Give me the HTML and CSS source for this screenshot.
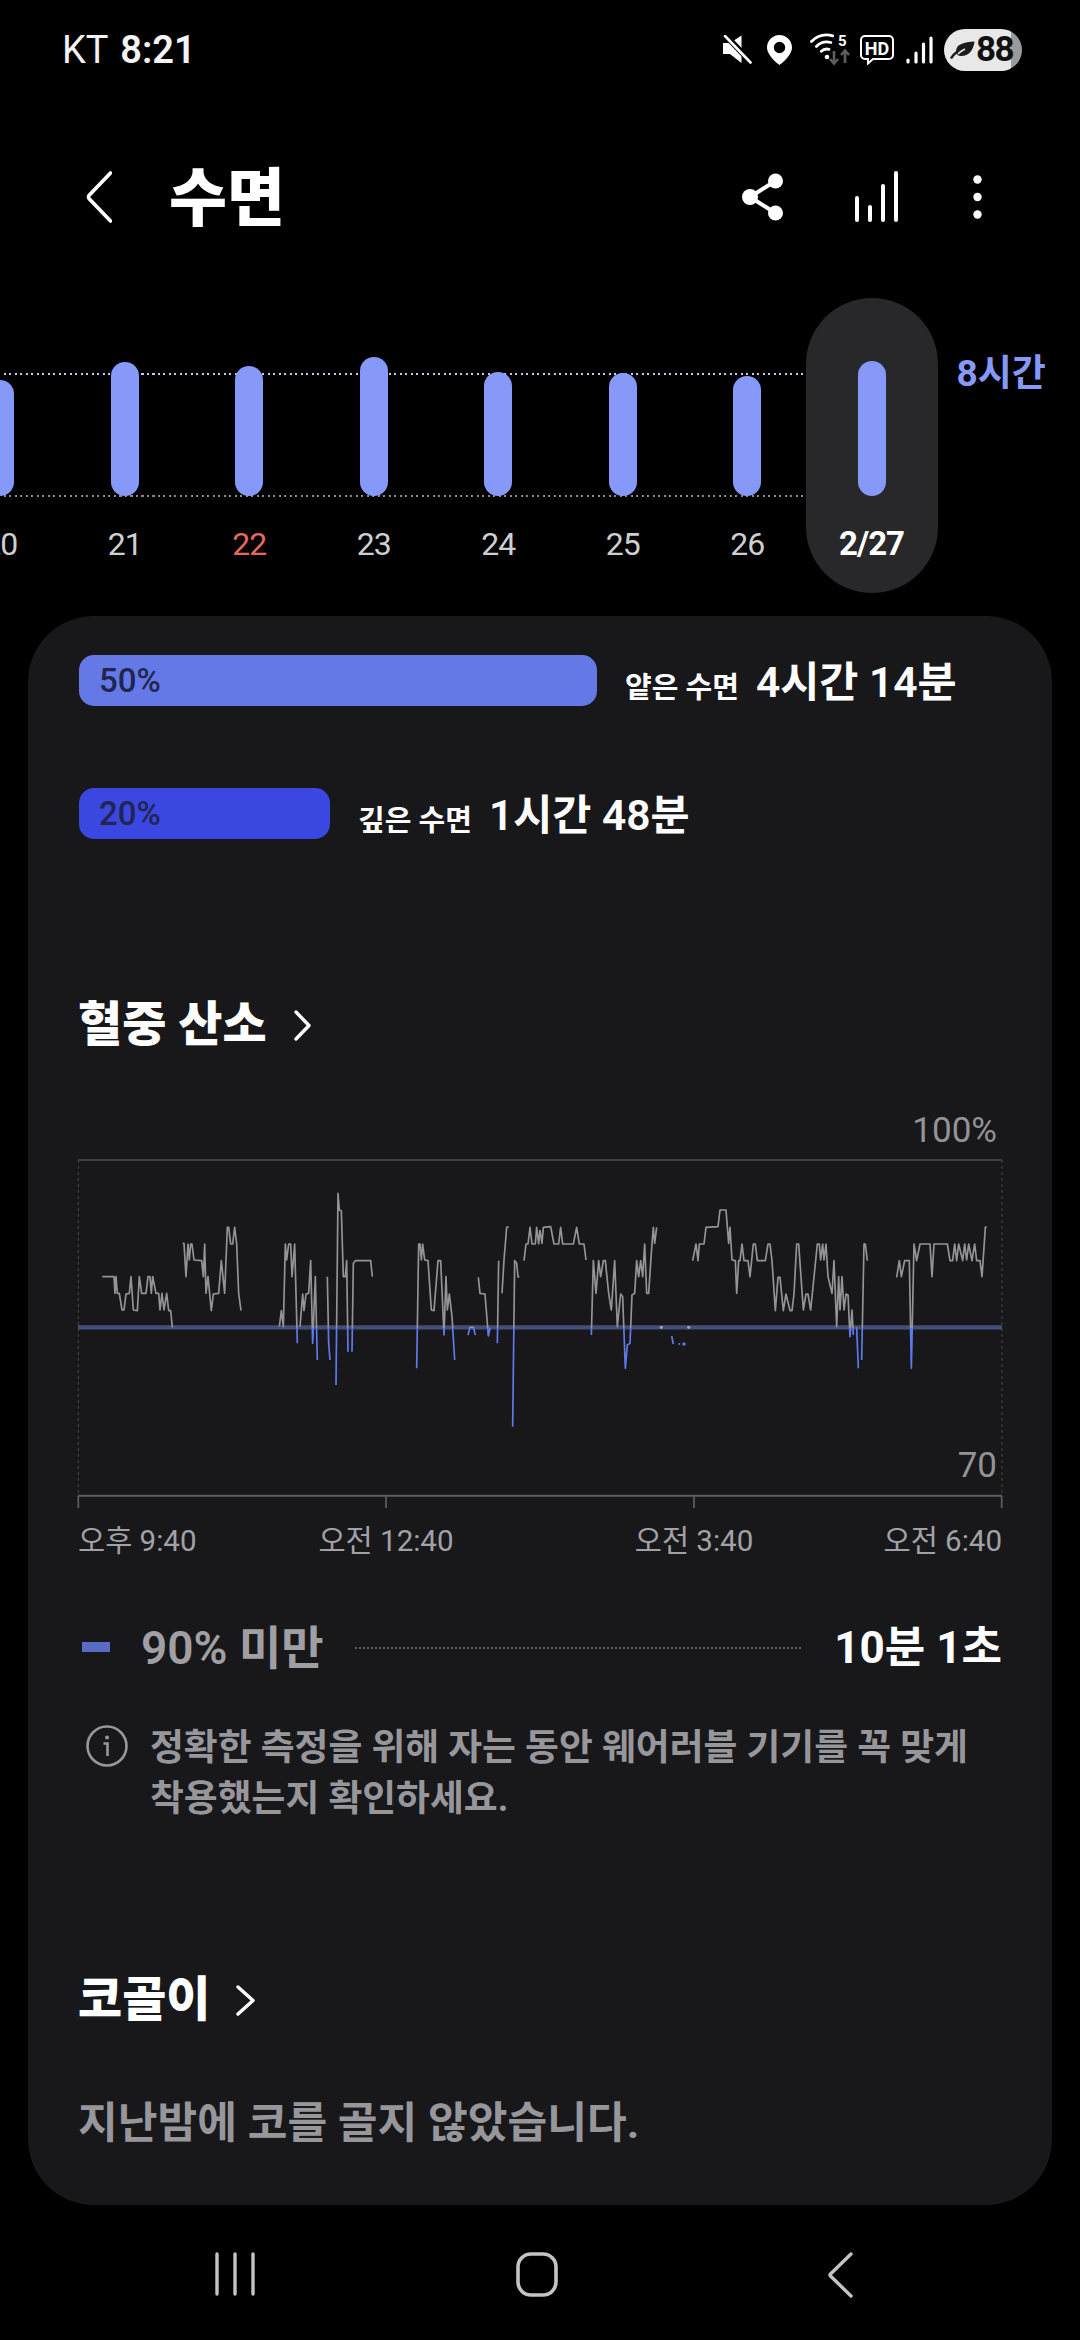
FILE: index.html
```html
<!DOCTYPE html>
<html lang="ko">
<head>
<meta charset="utf-8">
<title>수면</title>
<link rel="stylesheet" href="styles.css">
</head>
<body>
<div class="screen">
  <header class="status">
    <div class="clock"><span class="carrier">KT</span> <span class="time">8:21</span></div>
    <div class="status-icons">
      <svg class="i-mute" width="30" height="30" viewBox="0 0 30 30"><path d="M1 8H8L19.5 .5V28L8 19H1Z" fill="#fff"/><path d="M3 0 29 27" stroke="#000" stroke-width="6"/><path d="M3 1 28.5 27.5" stroke="#fff" stroke-width="2.6" stroke-linecap="round"/></svg>
      <svg class="i-pin" width="25" height="30" viewBox="0 0 25 30"><path fill="#fff" fill-rule="evenodd" d="M12.5 0C5.6 0 0 5.6 0 12.5 0 21 12.5 30 12.5 30S25 21 25 12.5C25 5.6 19.4 0 12.5 0ZM12.5 6.800a5.700 5.700 0 1 1 0 11.400 5.700 5.700 0 1 1 0-11.400Z"/></svg>
      <svg class="i-wifi" width="44" height="38" viewBox="0 -4 44 38"><g fill="none" stroke="#fff" stroke-width="2.800" stroke-linecap="round"><path d="M2.400 6.400A22 22 0 0 1 23.700 .8"/><path d="M7.400 11.400A15 15 0 0 1 21.900 7.500"/><path d="M12.300 16.300A8 8 0 0 1 20 14.300"/></g><circle cx="18" cy="22" r="2.300" fill="#fff"/><text class="wifi-five" x="29" y="11">5</text><path d="M25 16V28M21 24l4 4.500 4-4.500M36 28V16M32 20l4-4.500 4 4.500" fill="none" stroke="#5e5e5e" stroke-width="2.600"/></svg>
      <svg class="i-hd" width="34" height="30" viewBox="0 0 34 30"><path d="M5 1H29a4 4 0 0 1 4 4V20a4 4 0 0 1-4 4H13L8 28.500V24H5a4 4 0 0 1-4-4V5a4 4 0 0 1 4-4Z" fill="none" stroke="#fff" stroke-width="2"/><text class="hd-text" x="17" y="19.500">HD</text></svg>
      <svg class="i-signal" width="27" height="28" viewBox="0 0 27 28"><g stroke="#fff" stroke-width="3.200" stroke-linecap="round"><path d="M2 24V26"/><path d="M10 17V26"/><path d="M17.500 8V26"/><path d="M25 2V26"/></g></svg>
      <div class="battery"><svg width="25" height="18" viewBox="0 0 25 18"><path d="M24.500 .5C14 1 6 3 6 10.500 6 13.500 8.500 15 11 15 19 15 23.500 9 24.500 .5Z" fill="#1c1c1c"/><path d="M1 17.500C3 13.500 8 9.500 15 7" fill="none" stroke="#1c1c1c" stroke-width="2.400"/><path d="M8 13C10 11 12 9.500 15 8" fill="none" stroke="#e8e8e8" stroke-width="1.600"/></svg><span>88</span></div>
    </div>
  </header>

  <nav class="appbar">
    <svg class="back" width="26" height="52" viewBox="0 0 26 52"><path d="M24.500 2 3 24.500Q2 26 3 27.500L24.500 50" fill="none" stroke="#fff" stroke-width="3.600" stroke-linecap="round"/></svg>
    <h1 class="title">수면</h1>
    <div class="actions">
      <svg class="a-share" width="42" height="48" viewBox="0 0 42 48"><g fill="#fff"><circle cx="33.500" cy="8" r="7.500"/><circle cx="8" cy="24" r="8"/><circle cx="33.500" cy="40" r="7.500"/></g><path d="M33.500 8 8 24 33.500 40" fill="none" stroke="#fff" stroke-width="4"/></svg>
      <svg class="a-stats" width="44" height="52" viewBox="0 0 44 52"><g stroke="#fff" stroke-width="4" stroke-linecap="round"><path d="M3 27V49"/><path d="M16 36V49"/><path d="M29 15V49"/><path d="M42 2V49"/></g></svg>
      <svg class="a-more" width="9" height="44" viewBox="0 0 9 44"><g fill="#fff"><circle cx="4.500" cy="4.500" r="4.200"/><circle cx="4.500" cy="22" r="4.200"/><circle cx="4.500" cy="39.500" r="4.200"/></g></svg>
    </div>
  </nav>

  <section class="trend">
    <div class="guide guide-top"></div>
    <div class="guide guide-bottom"></div>
    <div class="day"><div class="plot"><div class="bar" style="height:116px"></div></div><div class="day-label">20</div></div>
    <div class="day"><div class="plot"><div class="bar" style="height:134px"></div></div><div class="day-label">21</div></div>
    <div class="day"><div class="plot"><div class="bar" style="height:130px"></div></div><div class="day-label sunday">22</div></div>
    <div class="day"><div class="plot"><div class="bar" style="height:139px"></div></div><div class="day-label">23</div></div>
    <div class="day"><div class="plot"><div class="bar" style="height:124px"></div></div><div class="day-label">24</div></div>
    <div class="day"><div class="plot"><div class="bar" style="height:123px"></div></div><div class="day-label">25</div></div>
    <div class="day"><div class="plot"><div class="bar" style="height:120px"></div></div><div class="day-label">26</div></div>
    <div class="day current"><div class="plot"><div class="bar" style="height:135px"></div></div><div class="day-label">2/27</div></div>
    <div class="goal">8시간</div>
  </section>

  <main class="card">
    <div class="stage stage-light">
      <div class="stage-bar light" style="width:518px">50%</div>
      <span class="stage-name">얕은 수면</span>
      <span class="stage-value">4시간 14분</span>
    </div>
    <div class="stage stage-deep">
      <div class="stage-bar deep" style="width:251px">20%</div>
      <span class="stage-name">깊은 수면</span>
      <span class="stage-value">1시간 48분</span>
    </div>

    <h2 class="section-title oxygen-title">혈중 산소
      <svg width="17" height="31" viewBox="0 0 17 31"><path d="M2 2 15 15.500 2 29" fill="none" stroke="#fff" stroke-width="3.400" stroke-linecap="round" stroke-linejoin="round"/></svg>
    </h2>

    <div class="chart">
      <span class="y-label y-top">100%</span>
      <span class="y-label y-bottom">70</span>
      <svg class="chart-svg" width="924" height="348" viewBox="54 90 2772 1044">
        <defs>
          <linearGradient id="spo2" gradientUnits="userSpaceOnUse" x1="0" y1="0" x2="0" y2="1134">
            <stop offset="0.5238" stop-color="#949495"/>
            <stop offset="0.5238" stop-color="#5f7aee"/>
          </linearGradient>
        </defs>
        <path d="M54 90H2826" stroke="#3f3f41" stroke-width="6"/>
        <path d="M55 90V1097M2826 90V1097" stroke="#47474a" stroke-width="3" stroke-dasharray="9 9"/>
        <path d="M54 592H2826" stroke="#434e7a" stroke-width="13"/>
        <path d="M54 1097H2826" stroke="#5e5e61" stroke-width="6"/>
        <path d="M55 1097V1134M978 1097V1134M1902 1097V1134M2825 1097V1134" stroke="#5e5e61" stroke-width="5"/>
        <g fill="none" stroke="url(#spo2)" stroke-width="5" stroke-linejoin="round" stroke-linecap="butt">
          <path d="M127 440 162 440 165 490 168 440 172 490 178 490 186 540 192 540 198 492 208 490 213 440 220 540 232 542 238 440 245 490 258 490 264 440 270 440 274 490 278 440 288 490 296 490 300 540 306 490 312 540 320 490 326 542 332 542 337 592"/>
          <path d="M368 340 372 340 378 440 384 342 388 390 392 342 396 342 402 390 425 392 430 440 434 342 438 490 444 440 454 542 460 492 476 490 484 392 494 490 502 292 506 292 512 342 518 342 524 292 530 342 536 490 543 542"/>
          <path d="M658 590 664 542 670 590 676 342 680 390 686 342 692 342 696 440 704 342 712 640"/>
          <path d="M720 590 728 492 732 542 738 492 746 490 752 392 758 640 766 440 772 690"/>
          <path d="M802 440 806 640 810 690"/>
          <path d="M828 765 834 190 838 240 844 242 850 440 856 440 860 392 864 665"/>
          <path d="M876 665 880 400 886 392 932 392 937 440"/>
          <path d="M1070 715 1076 342 1080 342 1084 390 1088 342 1094 390 1104 392 1114 540 1122 542 1134 392 1142 392 1152 615 1158 440 1162 540 1168 492 1176 560 1184 690"/>
          <path d="M1224 615 1230 592 1240 592 1246 615"/>
          <path d="M1255 442 1260 490 1275 492 1285 618 1290 595 1286 610"/>
          <path d="M1312 640 1316 392"/>
          <path d="M1326 490 1332 390 1340 292 1346 290"/>
          <path d="M1358 890 1364 392 1370 400 1374 440 1378 442"/>
          <path d="M1392 392 1398 342 1404 342 1410 292 1416 342 1426 342 1430 292 1436 342 1440 300"/>
          <g transform="translate(1440 0)">
            <path d="M0 300 6 340 10 292 32 290 42 342 56 342 62 292 68 342 100 342 110 292 118 342 132 342 138 390"/>
            <path d="M154 615 160 392 168 490 176 392 182 440 190 392 196 392 206 490 214 540 224 392 232 590 242 492 248 500 256 715 262 645 270 640 276 495 284 490 290 392 296 440 302 392 308 440 314 342 320 490 326 490 336 340 340 292 344 340 350 292"/>
            <path d="M395 618 400 642"/>
            <path d="M458 392 468 342 474 392 478 342 492 342 498 292 534 290 540 240 558 240 566 340 570 292 576 390 586 392 590 490 596 392 600 392 606 342 612 392 624 392 630 440 640 342 646 342 652 392 676 392 684 342 690 342 696 392 706 542 714 442 720 442 730 542 738 492 750 542 756 542 762 492 770 342 776 342 790 540 798 492 804 492 812 540 832 342 838 342 842 390 848 342 852 390 858 342 864 440 876 490 882 392 890 590 896 440 900 540 906 440 912 540 918 492 924 495 930 620 936 540 940 615"/>
            <path d="M950 592 955 715"/>
            <path d="M965 690 972 342 976 342 982 392"/>
            <path d="M1070 442 1078 392 1084 440 1094 392 1108 392 1114 715 1122 342 1130 392 1140 342 1170 342 1176 440 1182 342 1222 342 1230 392 1238 392 1244 342 1250 392 1256 342 1268 392 1274 342 1280 390 1286 342 1296 392 1304 342 1310 392 1320 392 1326 440 1336 292 1340 290"/>
            <circle cx="364" cy="592" r="5" fill="#a0a0a8" stroke="none"/>
            <circle cx="446" cy="592" r="5" fill="#a0a0a8" stroke="none"/>
            <circle cx="418" cy="642" r="3" fill="#5f7aee" stroke="none"/>
            <circle cx="432" cy="642" r="5" fill="#5f7aee" stroke="none"/>
          </g>
        </g>
      </svg>
    </div>
    <div class="x-axis">
      <span class="x-first">오후 9:40</span>
      <span class="x-mid">오전 12:40</span>
      <span class="x-mid">오전 3:40</span>
      <span class="x-last">오전 6:40</span>
    </div>

    <div class="legend">
      <span class="legend-mark"></span>
      <span class="legend-name">90% 미만</span>
      <span class="legend-dots"></span>
      <span class="legend-value">10분 1초</span>
    </div>

    <div class="info">
      <svg class="info-icon" width="42" height="42" viewBox="0 0 42 42"><circle cx="21" cy="21" r="19.500" fill="none" stroke="#97979b" stroke-width="2.600"/><circle cx="21" cy="12.500" r="2" fill="#97979b"/><path d="M17.500 18.500H21.500V31" fill="none" stroke="#97979b" stroke-width="2.600"/></svg>
      <p class="info-text">정확한 측정을 위해 자는 동안 웨어러블 기기를 꼭 맞게<br>착용했는지 확인하세요.</p>
    </div>

    <h2 class="section-title snore-title">코골이
      <svg width="19" height="31" viewBox="0 0 19 31"><path d="M2 2 17 15.500 2 29" fill="none" stroke="#fff" stroke-width="3.400" stroke-linecap="round" stroke-linejoin="round"/></svg>
    </h2>
    <p class="snore-text">지난밤에 코를 골지 않았습니다.</p>
  </main>

  <footer class="navbar">
    <svg class="n-recent" width="40" height="44" viewBox="0 0 40 44"><g stroke="#c4c4c4" stroke-width="3.400" stroke-linecap="round"><path d="M2 2V42"/><path d="M20 2V42"/><path d="M38 2V42"/></g></svg>
    <svg class="n-home" width="42" height="45" viewBox="0 0 42 45"><rect x="2" y="2" width="38" height="41" rx="13" fill="none" stroke="#c4c4c4" stroke-width="3.600"/></svg>
    <svg class="n-back" width="25" height="46" viewBox="0 0 25 46"><path d="M23 2 2.500 22Q1.500 23 2.500 24L23 44" fill="none" stroke="#c4c4c4" stroke-width="3.400" stroke-linecap="round"/></svg>
  </footer>
</div>
</body>
</html>
```

FILE: styles.css
```css
* { box-sizing: border-box; }
html, body { margin: 0; padding: 0; background: #000; }
body { font-family: Roboto, "Noto Sans CJK KR", "Noto Sans", sans-serif; color: #fff; }
.screen { width: 1080px; height: 2340px; overflow: hidden; display: flex; flex-direction: column; background: #000; }

/* status bar */
.status { height: 100px; flex: none; display: flex; align-items: center; padding: 0 58px 0 62px; }
.clock { font-size: 38px; line-height: 44px; color: #f4f4f4; }
.time { font-weight: 600; margin-left: 3px; }
.status-icons { margin-left: auto; display: flex; align-items: center; }
.status-icons svg { display: block; }
.i-pin { margin-left: 15px; }
.i-wifi { margin-left: 17px; }
.i-hd { margin-left: 7px; }
.i-signal { margin-left: 12px; }
.wifi-five { font: 700 15px Roboto, sans-serif; fill: #fff; }
.hd-text { font: 700 18px Roboto, sans-serif; fill: #fff; text-anchor: middle; }
.battery { margin-left: 11px; width: 78px; height: 42px; border-radius: 21px; display: flex; align-items: center; padding-left: 6px;
  background: linear-gradient(90deg, #e8e8e8 0 67px, #9a9a9a 67px); color: #111; font-size: 35px; font-weight: 700; letter-spacing: -1.500px; line-height: 42px; }
.battery span { margin-left: 1px; }

/* app bar */
.appbar { height: 134px; margin-top: 30px; flex: none; display: flex; align-items: center; padding: 0 98px 0 86px; }
.back { display: block; }
.title { margin: 4px 0 0 57px; font-size: 63px; line-height: 80px; font-weight: 900; }
.actions { margin-left: auto; display: flex; align-items: center; }
.actions svg { display: block; }
.a-stats { margin-left: 70px; }
.a-more { margin-left: 75px; }

/* trend strip */
.trend { position: relative; height: 295px; margin: 34px 0 0 -62px; flex: none; display: flex; }
.guide { position: absolute; left: 0; width: 865px; height: 2px; }
.guide-top { top: 75px; background: repeating-linear-gradient(90deg, #c5cbee 0 2px, transparent 2px 5.500px); }
.guide-bottom { top: 197px; background: repeating-linear-gradient(90deg, #8a8a95 0 2px, transparent 2px 5.500px); }
.day { position: relative; width: 124.500px; flex: none; display: flex; flex-direction: column; align-items: center; }
.plot { height: 198px; display: flex; align-items: flex-end; }
.bar { width: 28px; border-radius: 14px; background: #8699f8; }
.day-label { margin-top: 31px; font-size: 32px; letter-spacing: -1px; line-height: 34px; color: #cfcfcf; }
.day-label.sunday { color: #e5685f; }
.current { width: 132px; margin-left: -4px; border-radius: 66px; background: #28282a; }
.current .day-label { color: #fff; font-weight: 700; font-size: 33px; }
.goal { margin: 54px 0 0 19px; font-size: 37px; line-height: 44px; font-weight: 700; color: #8699f8; white-space: nowrap; }

/* card */
.card { margin: 23px 28px 0; height: 1589px; flex: none; border-radius: 66px; background: #18181b; padding: 39px 50px 56px; }
.stage { display: flex; align-items: center; height: 51px; margin-left: 1px; white-space: nowrap; }
.stage-deep { margin-top: 82px; }
.stage-bar { height: 51px; border-radius: 15px; padding-left: 20px; font-size: 33px; font-weight: 500; line-height: 51px; color: #20264f; flex: none; }
.light { background: #6479e6; }
.deep { background: #3a47e0; }
.stage-name { margin-left: 28px; font-size: 29px; font-weight: 700; line-height: 40px; padding-top: 14px; }
.stage-value { margin-left: 17px; font-size: 42.500px; font-weight: 600; line-height: 52px; padding-top: 6px; height: 60px; }

.section-title { margin: 0; display: flex; align-items: center; font-size: 48px; font-weight: 900; line-height: 60px; height: 60px; }
.section-title svg { display: block; }
.oxygen-title { margin-top: 156px; gap: 27px; }
.snore-title { margin-top: 146px; gap: 26px; }

.chart { position: relative; height: 348px; margin-top: 105px; }
.chart-svg { display: block; overflow: visible; }
.y-label { position: absolute; right: 5px; font-size: 35px; line-height: 40px; color: #939397; }
.y-top { top: -49px; }
.y-bottom { top: 286px; }

.x-axis { display: grid; grid-template-columns: 1fr 2fr 2fr 1fr; margin-top: 13px; height: 40px; font-size: 29.500px; line-height: 40px; color: #a2a2a6; white-space: nowrap; }
.x-first { justify-self: start; }
.x-mid { justify-self: center; }
.x-last { justify-self: end; }

.legend { display: flex; align-items: center; height: 50px; margin-top: 62px; white-space: nowrap; }
.legend-mark { width: 28px; height: 10px; margin-left: 4px; background: #5a6bc4; flex: none; margin-top: -2px; }
.legend-name { margin-left: 31px; font-size: 46px; font-weight: 600; color: #a0a0a4; line-height: 50px; }
.legend-dots { flex: 1; height: 2px; margin: 0 32px 0 31px; background: repeating-linear-gradient(90deg, #5c5c60 0 2px, transparent 2px 4px); }
.legend-value { font-size: 44px; font-weight: 700; line-height: 50px; }

.info { display: flex; align-items: flex-start; margin-top: 49px; }
.info-icon { display: block; margin: 3px 0 0 8px; flex: none; }
.info-text { margin: 0 0 0 22px; font-size: 36.800px; font-weight: 700; line-height: 51px; color: #97979b; white-space: nowrap; }

.snore-text { margin: 69px 0 0; font-size: 43.200px; font-weight: 700; line-height: 50px; color: #97979b; white-space: nowrap; }

/* navigation bar */
.navbar { flex: none; display: flex; align-items: flex-start; padding: 47px 0 0 215px; }
.navbar svg { display: block; }
.n-home { margin-left: 261px; }
.n-back { margin-left: 270px; }
```
